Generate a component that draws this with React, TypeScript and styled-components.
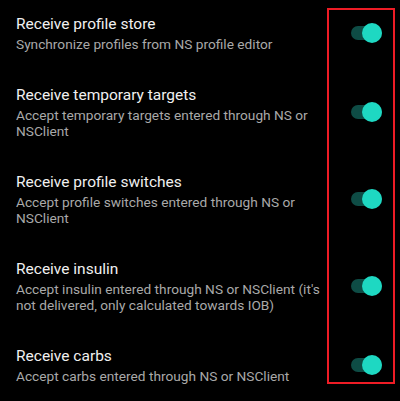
import React, { useState } from 'react';
import styled, { createGlobalStyle } from 'styled-components';

const GlobalStyle = createGlobalStyle`
  html, body {
    margin: 0;
    padding: 0;
    background: #000;
  }
  body {
    font-family: Roboto, "Noto Sans", sans-serif;
    -webkit-font-smoothing: antialiased;
  }
`;

const Screen = styled.div`
  position: relative;
  width: 400px;
  height: 401px;
  overflow: hidden;
  background: #000;
`;

const List = styled.div`
  display: flex;
  flex-direction: column;
  margin-top: -3px;
`;

const Row = styled.div`
  display: flex;
  align-items: center;
  padding: 16.5px 18px 16.5px 16px;
  gap: 16px;
`;

const TextBlock = styled.div`
  flex: 1;
  min-width: 0;
`;

const Title = styled.div`
  color: #f0f0f0;
  font-size: 15.5px;
  line-height: 20px;
`;

const Summary = styled.div`
  color: #a9a9a9;
  font-size: 13.7px;
  line-height: 16px;
  margin-top: 2px;
`;

const Track = styled.button<{ $on: boolean }>`
  position: relative;
  flex: none;
  width: 31px;
  height: 14px;
  padding: 0;
  border: none;
  border-radius: 7px;
  background: ${p => (p.$on ? '#0e4c45' : '#5a5a5a')};
  cursor: pointer;
`;

const Thumb = styled.span<{ $on: boolean }>`
  position: absolute;
  top: -3px;
  left: ${p => (p.$on ? '11px' : '0')};
  width: 20px;
  height: 20px;
  border-radius: 50%;
  background: ${p => (p.$on ? '#1ed8c2' : '#d0d0d0')};
  transition: left 0.15s;
`;

const Highlight = styled.div`
  position: absolute;
  left: 327px;
  top: 8px;
  width: 68px;
  height: 376px;
  box-sizing: border-box;
  border: 2px solid #ee1c25;
  pointer-events: none;
`;

const items = [
  {
    title: 'Receive profile store',
    summary: 'Synchronize profiles from NS profile editor',
  },
  {
    title: 'Receive temporary targets',
    summary: 'Accept temporary targets entered through NS or NSClient',
  },
  {
    title: 'Receive profile switches',
    summary: 'Accept profile switches entered through NS or NSClient',
  },
  {
    title: 'Receive insulin',
    summary:
      "Accept insulin entered through NS or NSClient (it's not delivered, only calculated towards IOB)",
  },
  {
    title: 'Receive carbs',
    summary: 'Accept carbs entered through NS or NSClient',
  },
];

export default function App() {
  const [checked, setChecked] = useState(items.map(() => true));

  const toggle = (i: number) =>
    setChecked(prev => prev.map((v, j) => (j === i ? !v : v)));

  return (
    <Screen>
      <GlobalStyle />
      <List>
        {items.map((item, i) => (
          <Row key={item.title}>
            <TextBlock>
              <Title>{item.title}</Title>
              <Summary>{item.summary}</Summary>
            </TextBlock>
            <Track
              role="switch"
              aria-checked={checked[i]}
              $on={checked[i]}
              onClick={() => toggle(i)}
            >
              <Thumb $on={checked[i]} />
            </Track>
          </Row>
        ))}
      </List>
      <Highlight />
    </Screen>
  );
}
